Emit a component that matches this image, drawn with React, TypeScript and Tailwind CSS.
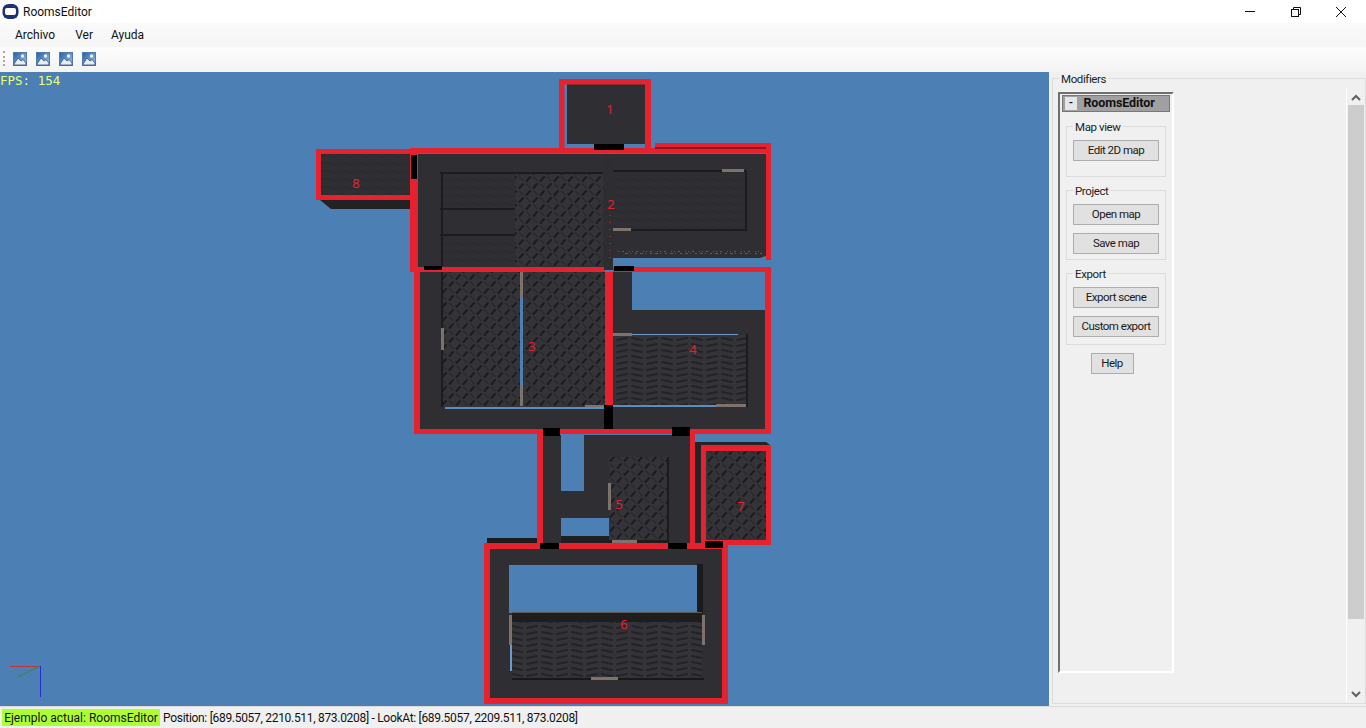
const UI = { fontFamily: 'Roboto, "Noto Sans", sans-serif' };

function PicIcon() {
  return (
    <svg width="14" height="14" viewBox="0 0 14 14">
      <defs>
        <linearGradient id="sky" x1="0" y1="0" x2="1" y2="1">
          <stop offset="0" stopColor="#1f5fa8" />
          <stop offset="1" stopColor="#a9c6e4" />
        </linearGradient>
      </defs>
      <rect x="0.5" y="0.5" width="13" height="13" fill="url(#sky)" stroke="#4f7cb0" />
      <circle cx="9.5" cy="4" r="1.7" fill="#f0f4fa" />
      <path d="M1 12 L5 6 L8 9 L10 7.5 L13 11 L13 13 L1 13 Z" fill="#e6edf5" stroke="#2d5280" strokeWidth="0.8" />
    </svg>
  );
}

function Btn({ label, className }: { label: string; className?: string }) {
  return (
    <div className={"h-[21px] bg-[#e1e1e1] border border-[#adadad] flex items-center justify-center text-[11.5px] tracking-[-0.5px] leading-none text-[#1a1a1a] " + (className ?? "w-[86px]")}>
      {label}
    </div>
  );
}

function Group({ title, children, className }: { title: string; children: React.ReactNode; className: string }) {
  return (
    <div className={"relative w-[100px] ml-[6px] border border-[#dcdcdc] pt-[13px] flex flex-col items-center gap-[8px] " + className}>
      <span className="absolute left-[6px] top-[-7px] bg-[#f0f0f0] px-[2px] text-[11.5px] tracking-[-0.4px] leading-[14px] text-[#222]">{title}</span>
      {children}
    </div>
  );
}

const R = "#e6222e";
const W = "#2f2f33";

function Block({ x, y, w, h, fill }: { x: number; y: number; w: number; h: number; fill: string }) {
  return <rect x={x} y={y} width={w} height={h} fill={fill} />;
}

function Scene() {
  const labels: [string, number, number][] = [
    ["1", 610, 114], ["2", 611, 209], ["3", 532, 351], ["4", 693, 354],
    ["5", 619, 509], ["6", 624, 629], ["7", 741, 511], ["8", 356, 188],
  ];
  const blacks: [number, number, number, number][] = [
    [594, 144, 30, 6], [604, 405, 9, 24], [543, 428, 17, 8], [672, 427, 18, 9],
    [540, 543, 19, 6], [668, 543, 19, 6], [705, 541, 18, 7], [411, 155, 6, 24],
    [424, 266, 18, 4], [614, 266, 20, 5],
  ];
  const grays: [number, number, number, number][] = [
    [520, 272, 3, 26], [520, 385, 3, 21], [441, 328, 3, 22], [585, 405, 20, 2], [613, 333, 19, 3],
    [716, 404, 30, 3], [722, 169, 22, 3], [612, 228, 19, 3], [608, 483, 3, 27], [612, 540, 25, 3],
    [509, 615, 3, 30], [702, 615, 3, 30], [591, 677, 27, 3],
  ];
  return (
    <svg className="absolute inset-0" width="1049" height="634" viewBox="0 72 1049 634">
      <defs>
        <pattern id="plate" width="14" height="14" patternUnits="userSpaceOnUse">
          <rect width="14" height="14" fill="#333338" />
          <path d="M1.5 6 L5 2 M8.5 13 L12 9" stroke="#1c1c20" strokeWidth="2" strokeLinecap="round" />
          <path d="M8.5 2 L12 5.5 M1.5 9 L5 12.5" stroke="#29292d" strokeWidth="1.5" strokeLinecap="round" />
        </pattern>
        <pattern id="wave" width="30" height="12" patternUnits="userSpaceOnUse">
          <rect width="30" height="12" fill="#333338" />
          <path d="M2 2 L12 4 M17 4 L27 2 M2 8 L12 10 M17 10 L27 8" stroke="#232327" strokeWidth="2" strokeLinecap="round" />
        </pattern>
        <pattern id="fine" width="16" height="8" patternUnits="userSpaceOnUse">
          <rect width="16" height="8" fill="#2f2f33" />
          <path d="M0 5 L7 2 L16 5" stroke="#2a2a2e" strokeWidth="1.3" fill="none" />
        </pattern>
      </defs>
      <rect x="0" y="72" width="1049" height="634" fill="#4c7fb3" />

      {/* room 8 */}
      <path d="M320 200 H411 V209 H331 Z" fill="#222224" />
      <Block x={321} y={154} w={90} h={41} fill="url(#fine)" />
      {/* room 1 */}
      <Block x={567} y={84} w={78} h={60} fill={W} />
      {/* room 2 */}
      <path d="M418 154 H766 V256 L760 258 H613 V268 H418 Z" fill={W} />
      <Block x={442} y={174} w={73} h={34} fill="url(#fine)" />
      <Block x={442} y={235} w={73} h={31} fill="url(#fine)" />
      <Block x={515} y={174} w={88} h={92} fill="url(#plate)" />
      <Block x={613} y={172} w={132} h={57} fill="url(#fine)" />
      <Block x={440} y={172} w={163} h={2} fill="#1c1c1c" />
      <Block x={613} y={170} w={132} h={2} fill="#1c1c1c" />
      <Block x={440} y={208} w={75} h={2} fill="#1c1c1c" />
      <Block x={440} y={234} w={75} h={2} fill="#1c1c1c" />
      <Block x={441} y={174} w={2} h={92} fill="#1c1c1c" />
      <Block x={745} y={170} w={2} h={60} fill="#1c1c1c" />
      <Block x={613} y={229} w={134} h={2} fill="#1c1c1c" />
      {/* room 3 and 4 */}
      <Block x={420} y={272} w={193} h={158} fill={W} />
      <Block x={443} y={272} w={162} h={135} fill="url(#plate)" />
      <Block x={441} y={272} w={2} h={135} fill="#1c1c1c" />
      <Block x={520} y={272} w={3} h={134} fill="#4c7fb3" />
      <Block x={445} y={407} w={160} h={2} fill="#5a8dc0" />
      <path d="M613 272 H632 V310 H765 V430 H613 Z" fill={W} />
      <Block x={613} y={335} w={134} h={70} fill="url(#wave)" />
      <Block x={632} y={334} w={106} h={1} fill="#6d9ac6" />
      <Block x={613} y={405} w={120} h={2} fill="#5a8dc0" />
      <Block x={746} y={334} w={2} h={73} fill="#1c1c1c" />
      {/* room 5 */}
      <Block x={543} y={435} w={147} h={108} fill={W} />
      <Block x={561} y={435} w={23} h={56} fill="#4c7fb3" />
      <Block x={561} y={518} w={48} h={18} fill="#4c7fb3" />
      <Block x={561} y={536} w={48} h={7} fill="#1f1f22" />
      <Block x={609} y={457} w={58} h={83} fill="url(#plate)" />
      <Block x={667} y={457} w={2} h={83} fill="#1c1c1c" />
      <Block x={609} y={540} w={60} h={3} fill="#1c1c1c" />
      {/* room 7 */}
      <path d="M695 442 H766 L770 445 H701 V545 H695 Z" fill="#242427" />
      <Block x={706} y={451} w={60} h={89} fill="url(#plate)" />
      {/* room 6 */}
      <Block x={487} y={538} w={50} h={5} fill="#1d1d1f" />
      <Block x={490} y={549} w={232} h={149} fill={W} />
      <Block x={509} y={565} w={188} h={48} fill="#4c7fb3" />
      <Block x={697} y={564} w={6} h={50} fill="#1b1b1c" />
      <Block x={512} y={613} w={190} h={10} fill="#1e1e1f" />
      <Block x={512} y={612} w={190} h={1} fill="#5c5a55" />
      <Block x={512} y={622} w={190} h={57} fill="url(#wave)" />
      <Block x={510} y={645} w={2} h={26} fill="#6d9ac6" />
      <Block x={512} y={678} w={192} h={2} fill="#18181a" />

      {grays.map(([x, y, w, h], i) => <Block key={i} x={x} y={y} w={w} h={h} fill="#7d736c" />)}

      {/* red room outlines */}
      <path d="M559 79 H651 V148 H645 V84.5 H564.5 V148 H559 Z" fill={R} />
      <path d="M316 149 H411 V154 H321 V195 H411 V200 H316 Z" fill={R} />
      <path d="M410 148 H655 V143 H771 V260 H766 V153.5 H418 V267 H605 V272 H410 Z" fill={R} />
      <path d="M655 147.5 H766 V148.5 H655 Z" fill="#3a0a0e" />
      <path d="M613 267 H771 V272 H613 Z M765 272 H771 V434 H765 Z" fill={R} />
      <path d="M414 272 H420 V429 H771 V434 H414 Z" fill={R} />
      <Block x={605} y={272} w={8} h={134} fill={R} />
      <path d="M537 434 H543 V543 H690 V434 H695 V548 H537 Z" fill={R} />
      <path d="M701 445 H771 V545 H701 Z M706 451 V540 H766 V451 Z" fill={R} fillRule="evenodd" />
      <path d="M484 543 H728 V704 H484 Z M490 549 V698 H722 V549 Z" fill={R} fillRule="evenodd" />

      {/* column seam in room 2 */}
      <Block x={604} y={154} w={9} h={116} fill="#2e2e32" />
      <path d="M618 251.5 H762" stroke={R} strokeDasharray="1 3 2 5 1 2" />
      <path d="M625 253.5 H762" stroke={R} strokeDasharray="3 2 1 4 2 3" />
      <path d="M610 215 V262" stroke={R} strokeDasharray="1 6" />

      {blacks.map(([x, y, w, h], i) => <Block key={i} x={x} y={y} w={w} h={h} fill="#000" />)}

      {labels.map(([t, x, y]) => (
        <text key={t} x={x} y={y} textAnchor="middle" fontSize="13" fill="#e0242e" fontFamily="'Noto Sans', sans-serif">{t}</text>
      ))}

      {/* axes */}
      <path d="M10 666.5 H40" stroke="#c2323c" />
      <path d="M40.5 666 V697" stroke="#1f2fd0" />
      <path d="M18 677 L40 666" stroke="#2f8a3c" />
    </svg>
  );
}

export default function App() {
  return (
    <div className="w-[1366px] h-[728px] overflow-hidden flex flex-col bg-[#f0f0f0] text-[#111]" style={UI}>
      {/* title bar */}
      <div className="h-[23px] bg-white flex items-center shrink-0">
        <svg className="ml-[2px]" width="17" height="17" viewBox="0 0 17 17">
          <rect x="0.5" y="1" width="16" height="15" rx="6" fill="#1c2f7a" />
          <rect x="3" y="5" width="11" height="7" rx="2" fill="#ffffff" />
        </svg>
        <span className="ml-[4px] text-[12px] leading-none text-[#111]">RoomsEditor</span>
        <div className="ml-auto flex items-center">
          <svg className="mr-[34px]" width="12" height="12" viewBox="0 0 12 12"><path d="M1 5.5 H11" stroke="#111" /></svg>
          <svg className="mr-[33px]" width="12" height="12" viewBox="0 0 12 12" fill="none" stroke="#111"><rect x="1.5" y="3.5" width="7" height="7" /><path d="M3.5 3 V1.5 H10.5 V8.5 H9" /></svg>
          <svg className="mr-[19px]" width="12" height="12" viewBox="0 0 12 12" stroke="#111"><path d="M1 1 L11 11 M11 1 L1 11" /></svg>
        </div>
      </div>
      {/* menu */}
      <div className="h-[24px] bg-gradient-to-b from-[#fafafa] to-[#f6f6f6] flex items-center shrink-0 text-[12px]">
        <span className="ml-[15px]">Archivo</span>
        <span className="ml-[20px]">Ver</span>
        <span className="ml-[18px]">Ayuda</span>
      </div>
      {/* toolbar */}
      <div className="h-[25px] pb-[2px] bg-gradient-to-b from-[#fdfdfd] to-[#f3f3f3] flex items-center shrink-0">
        <div className="ml-[3px] w-[2px] h-[15px] border-l-2 border-dotted border-[#a8a8a8]" />
        <div className="ml-[8px] flex gap-[9px]">
          <PicIcon /><PicIcon /><PicIcon /><PicIcon />
        </div>
      </div>
      {/* body */}
      <div className="flex-1 flex min-h-0">
        <div className="relative w-[1049px] shrink-0">
          <Scene />
          <span className="absolute left-0 top-[2px] text-[12.5px] leading-[14px] text-[#e6ff7a]" style={{ fontFamily: '"DejaVu Sans Mono", monospace' }}>FPS: 154</span>
        </div>
        <div className="flex-1 pl-[3px] pt-[6px] pb-[2px] pr-0 relative">
          <div className="relative h-full border border-[#dcdcdc] pl-[5px] pt-[13px]">
            <span className="absolute left-[6px] top-[-7px] bg-[#f0f0f0] px-[2px] text-[11.5px] tracking-[-0.4px] leading-[14px] text-[#222]">Modifiers</span>
            <div className="flex h-full items-start">
              <div className="w-[116px] h-[581px] border-l-2 border-t-2 border-[#6f6f6f] border-r-2 border-b-2 border-r-white border-b-white">
                <div className="mx-[2px] mt-[1px] h-[17px] bg-[#a0a0a0] border border-[#777] flex items-center relative">
                  <span className="ml-[2px] w-[12px] h-[13px] bg-[#e6e6e6] text-[11px] leading-[11px] text-center font-bold">-</span>
                  <span className="absolute left-[20px] right-[14px] text-center text-[12.5px] tracking-[-0.1px] font-bold leading-none text-[#111]">RoomsEditor</span>
                </div>
                <div className="flex flex-col mt-[14px] gap-[13px]">
                  <Group title="Map view" className="h-[51px]"><Btn label="Edit 2D map" /></Group>
                  <Group title="Project" className="h-[70px]"><Btn label="Open map" /><Btn label="Save map" /></Group>
                  <Group title="Export" className="h-[72px]"><Btn label="Export scene" /><Btn label="Custom export" /></Group>
                </div>
                <div className="flex justify-center mt-[8px] pr-[8px]"><Btn label="Help" className="w-[43px]" /></div>
              </div>
              <div className="ml-auto w-[18px] h-[614px] -mt-[4px] border-l border-white flex flex-col items-center mr-[1px]">
                <svg className="mt-[6px]" width="10" height="8" viewBox="0 0 10 8" fill="none" stroke="#606060" strokeWidth="2"><path d="M1 6 L5 2 L9 6" /></svg>
                <div className="w-[16px] h-[514px] mt-[3px] bg-[#cdcdcd]" />
                <svg className="mt-auto mb-[4px]" width="10" height="8" viewBox="0 0 10 8" fill="none" stroke="#606060" strokeWidth="2"><path d="M1 2 L5 6 L9 2" /></svg>
              </div>
            </div>
          </div>
        </div>
      </div>
      {/* status */}
      <div className="h-[22px] border-t border-[#dadada] flex items-center shrink-0 text-[12px] leading-none whitespace-nowrap">
        <span className="ml-[2px] h-[17px] w-[158px] bg-[#adff2f] flex items-center justify-center">Ejemplo actual: RoomsEditor</span>
        <span className="ml-[3px] tracking-[-0.3px]">Position: [689.5057, 2210.511, 873.0208] - LookAt: [689.5057, 2209.511, 873.0208]</span>
      </div>
    </div>
  );
}
